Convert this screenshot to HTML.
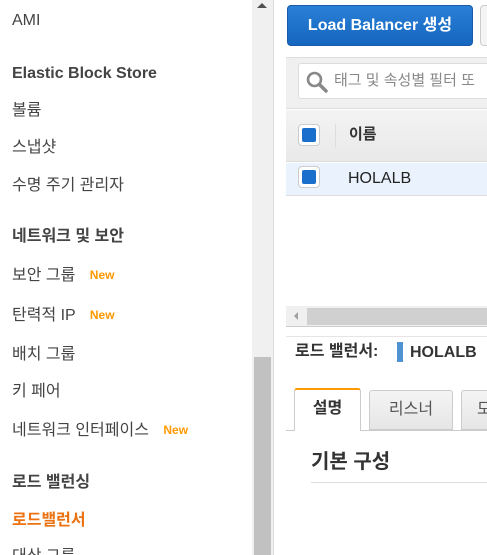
<!DOCTYPE html>
<html><head><meta charset="utf-8"><style>
*{margin:0;padding:0;box-sizing:border-box}
html,body{width:487px;height:555px;overflow:hidden}
body{background:#fff;position:relative;font-family:"Liberation Sans","Noto Sans CJK KR",sans-serif;color:#444;line-height:20px}
.a{position:absolute;white-space:nowrap}
.nav{font-size:16px;color:#444;left:12px}
.hd{font-size:16px;font-weight:bold;color:#444;left:12px}
.new{font-size:12px;font-weight:bold;color:#f90;vertical-align:1px}
</style></head><body>
<div class="a nav" style="top:11px">AMI</div>
<div class="a hd" style="top:64px">Elastic Block Store</div>
<div class="a nav" style="top:101px">볼륨</div>
<div class="a nav" style="top:138px">스냅샷</div>
<div class="a nav" style="top:176px">수명 주기 관리자</div>
<div class="a hd" style="top:227px">네트워크 및 보안</div>
<div class="a nav" style="top:265px">보안 그룹 <span class="new" style="margin-left:10px">New</span></div>
<div class="a nav" style="top:305px">탄력적 IP <span class="new" style="margin-left:10px">New</span></div>
<div class="a nav" style="top:345px">배치 그룹</div>
<div class="a nav" style="top:382px">키 페어</div>
<div class="a nav" style="top:420px">네트워크 인터페이스 <span class="new" style="margin-left:10px">New</span></div>
<div class="a hd" style="top:473px">로드 밸런싱</div>
<div class="a hd" style="top:511px;color:#ec7211">로드밸런서</div>
<div class="a nav" style="top:547px">대상 그룹</div>
<div class="a" style="left:252px;top:0;width:21px;height:555px;background:#f0f0f0"></div>
<div class="a" style="left:254px;top:357px;width:17px;height:198px;background:#c1c1c1"></div>
<div class="a" style="left:257px;top:3px;width:0;height:0;border-left:5px solid transparent;border-right:5px solid transparent;border-bottom:5px solid #505050"></div>
<div class="a" style="left:273px;top:0;width:1px;height:555px;background:#ddd"></div>
<div class="a" style="left:287px;top:5px;width:186px;height:41px;border-radius:4px;background:linear-gradient(#2a7fd6,#1566be);border:1px solid #1a5aa8;color:#fff;font-weight:bold;font-size:16px;line-height:39px;text-align:center">Load Balancer 생성</div>
<div class="a" style="left:480px;top:5px;width:20px;height:41px;border-radius:4px;background:#f4f4f4;border:1px solid #ccc"></div>
<div class="a" style="left:286px;top:57px;width:201px;height:52px;background:#f0f0f0;border-top:1px solid #ddd;border-bottom:1px solid #ddd"></div>
<div class="a" style="left:298px;top:63px;width:200px;height:36px;background:#fff;border:1px solid #ddd;border-radius:3px"></div>
<svg class="a" style="left:305px;top:70px" width="24" height="24" viewBox="0 0 24 24"><circle cx="9.5" cy="9.5" r="6.5" fill="none" stroke="#888" stroke-width="2.6"/><path d="M14.5 14.5L21 21" stroke="#888" stroke-width="3.5" stroke-linecap="round"/></svg>
<div class="a" style="left:334px;top:71px;font-size:15px;color:#888">태그 및 속성별 필터 또</div>
<div class="a" style="left:286px;top:110px;width:201px;height:52px;background:linear-gradient(#f3f3f3,#e9e9e9);border-bottom:1px solid #ddd"></div>
<div class="a" style="left:298px;top:124px;width:22px;height:22px;border:1px solid #ccc;border-radius:4px;background:#fff"></div>
<div class="a" style="left:302px;top:128px;width:14px;height:14px;border-radius:2px;background:#1a6fcc"></div>
<div class="a" style="left:335px;top:124px;width:1px;height:24px;background:#ddd"></div>
<div class="a" style="left:349px;top:125px;font-size:15px;font-weight:bold;color:#333">이름</div>
<div class="a" style="left:286px;top:163px;width:201px;height:33px;background:#eaf3fd;border-bottom:1px solid #ddd"></div>
<div class="a" style="left:298px;top:166px;width:22px;height:22px;border:1px solid #ccc;border-radius:4px;background:#fff"></div>
<div class="a" style="left:302px;top:170px;width:14px;height:14px;border-radius:2px;background:#1a6fcc"></div>
<div class="a" style="left:348px;top:169px;font-size:16px;color:#222">HOLALB</div>
<div class="a" style="left:286px;top:306px;width:201px;height:21px;background:#f0f0f0;border-bottom:1px solid #ccc"></div>
<div class="a" style="left:307px;top:308px;width:180px;height:17px;background:#d0d0d0"></div>
<div class="a" style="left:294px;top:312px;width:0;height:0;border-top:4px solid transparent;border-bottom:4px solid transparent;border-right:4px solid #a0a0a0"></div>
<div class="a" style="left:286px;top:336px;width:201px;height:1px;background:#e5e5e5"></div>
<div class="a" style="left:295px;top:342px;font-size:16px;font-weight:bold;color:#333">로드 밸런서:</div>
<div class="a" style="left:397px;top:342px;width:6px;height:20px;background:#4f93d2"></div>
<div class="a" style="left:410px;top:343px;font-size:16px;font-weight:bold;color:#333">HOLALB</div>
<div class="a" style="left:286px;top:430px;width:201px;height:1px;background:#ccc"></div>
<div class="a" style="left:294px;top:388px;width:67px;height:43px;background:#fff;border:1px solid #ccc;border-top:2px solid #f90;border-bottom:none;border-radius:3px 3px 0 0;font-size:16px;font-weight:bold;color:#333;text-align:center;line-height:38px">설명</div>
<div class="a" style="left:369px;top:390px;width:84px;height:40px;background:linear-gradient(#f4f4f4,#e6e6e6);border:1px solid #ccc;border-radius:3px 3px 0 0;font-size:16px;color:#555;text-align:center;line-height:38px">리스너</div>
<div class="a" style="left:461px;top:390px;width:40px;height:40px;background:linear-gradient(#f4f4f4,#e6e6e6);border:1px solid #ccc;border-radius:3px 3px 0 0;font-size:16px;color:#555;line-height:38px;padding-left:15px">모</div>
<div class="a" style="left:311px;top:450px;font-size:20px;font-weight:bold;color:#333;line-height:24px">기본 구성</div>
<div class="a" style="left:311px;top:482px;width:176px;height:1px;background:#ddd"></div>
</body></html>
